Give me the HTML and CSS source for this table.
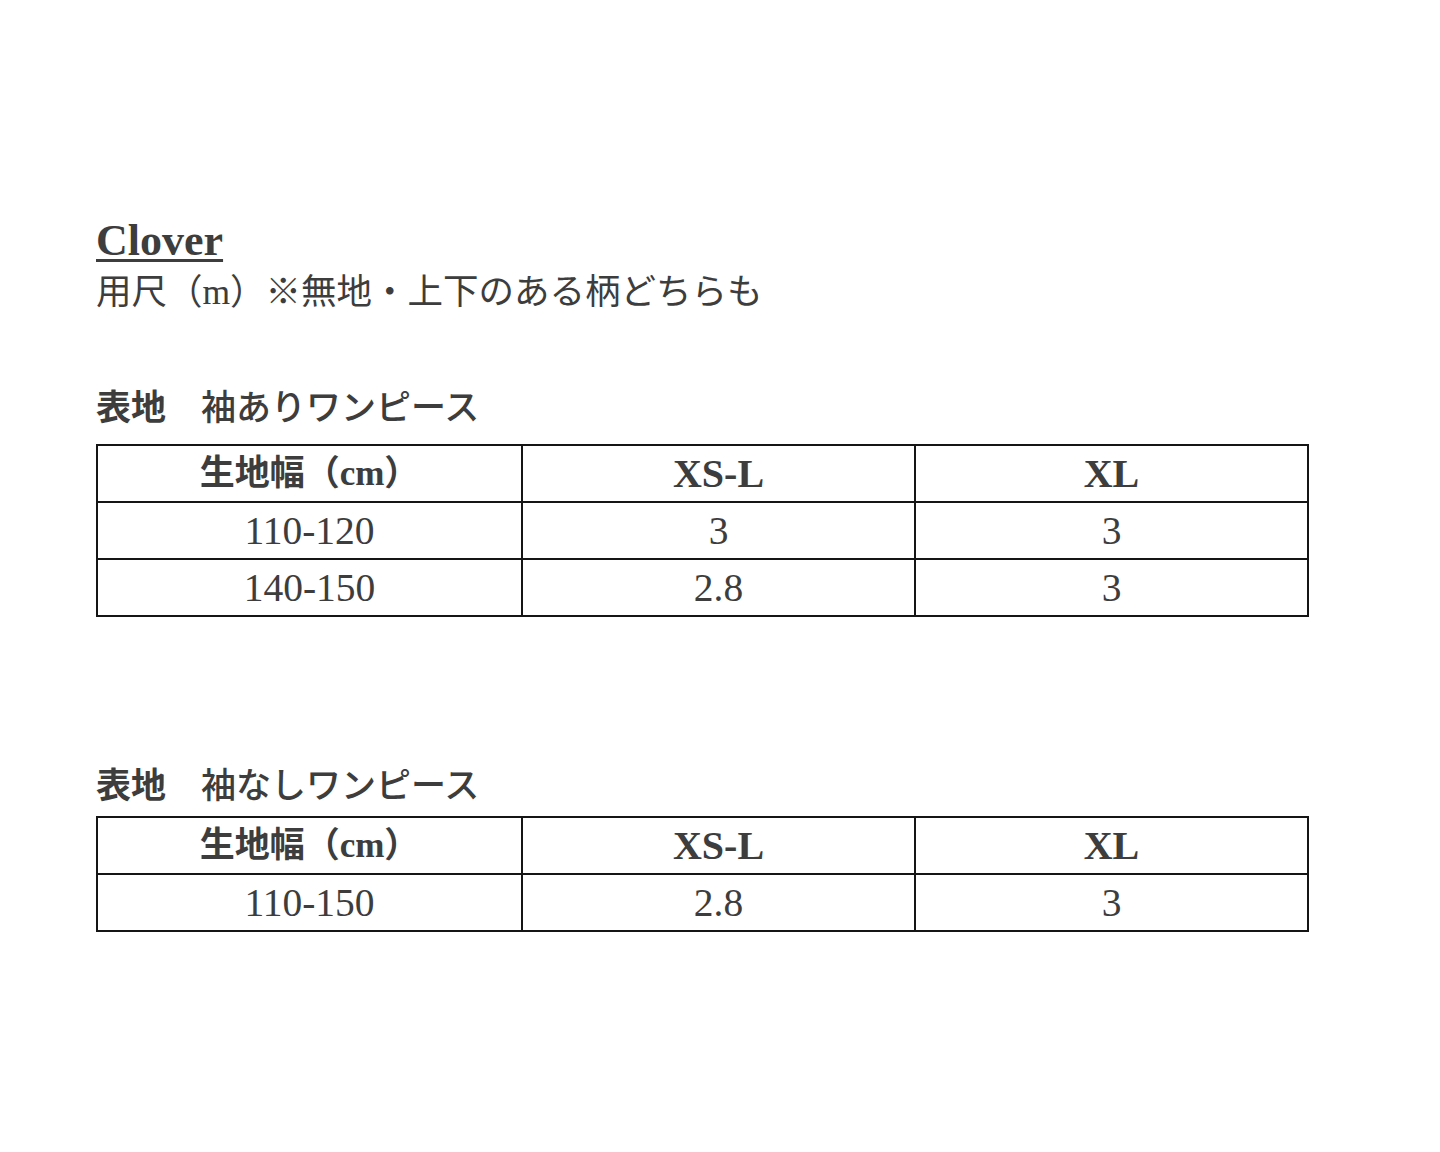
FILE: index.html
```html
<!DOCTYPE html>
<html lang="ja">
<head>
<meta charset="utf-8">
<title>Clover 用尺</title>
<link rel="stylesheet" href="styles.css">
</head>
<body>
<main class="doc">
  <h1 class="title">Clover</h1>
  <p class="note">用尺（m）※無地・上下のある柄どちらも</p>

  <section class="block block-first">
    <h2 class="heading"><span class="strong">表地</span>　袖ありワンピース</h2>
    <table class="sizes">
      <tr class="head">
        <th class="c1">生地幅（cm）</th>
        <th class="c2">XS-L</th>
        <th class="c3">XL</th>
      </tr>
      <tr>
        <td>110-120</td>
        <td>3</td>
        <td>3</td>
      </tr>
      <tr>
        <td>140-150</td>
        <td>2.8</td>
        <td>3</td>
      </tr>
    </table>
  </section>

  <section class="block block-second">
    <h2 class="heading"><span class="strong">表地</span>　袖なしワンピース</h2>
    <table class="sizes">
      <tr class="head">
        <th class="c1">生地幅（cm）</th>
        <th class="c2">XS-L</th>
        <th class="c3">XL</th>
      </tr>
      <tr>
        <td>110-150</td>
        <td>2.8</td>
        <td>3</td>
      </tr>
    </table>
  </section>
</main>
</body>
</html>
```

FILE: styles.css
```css
html, body {
  margin: 0;
  padding: 0;
  background: #ffffff;
}

body {
  font-family: "Liberation Serif", "Noto Sans CJK JP", serif;
  color: #3d3d3d;
}

.doc {
  padding: 215px 96px 0 96px;
}

.title {
  margin: 0;
  font-size: 44px;
  line-height: 52px;
  font-weight: bold;
  text-decoration: underline;
  text-decoration-thickness: 3px;
  text-underline-offset: 4px;
}

.note {
  margin: 0;
  font-size: 35.5px;
  line-height: 50px;
  font-weight: normal;
}

.block-first {
  margin-top: 67px;
}

.block-second {
  margin-top: 145px;
}

.heading {
  margin: 0 0 10px 0;
  font-size: 35px;
  line-height: 50px;
  font-weight: 500;
}

.block-second .heading {
  margin-bottom: 4px;
}

.strong {
  font-weight: bold;
}

.sizes {
  border-collapse: collapse;
  width: 1205px;
  table-layout: fixed;
}

.sizes th,
.sizes td {
  border: 2px solid #151515;
  height: 55px;
  padding: 0;
  text-align: center;
  vertical-align: middle;
  font-size: 39.5px;
  line-height: 40px;
}

.sizes th {
  font-weight: bold;
  font-size: 40px;
}

.sizes .c1 {
  width: 423px;
  font-size: 35px;
}

.sizes .c2,
.sizes .c3 {
  width: 391px;
}
```
